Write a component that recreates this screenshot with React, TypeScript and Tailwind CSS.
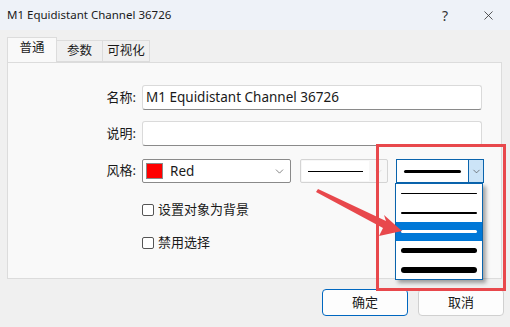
import { ChevronDown, X } from "lucide-react"

const font = { fontFamily: '"Noto Sans", "Noto Sans CJK SC", sans-serif' }

function LineItem({ h, active }: { h: number; active?: boolean }) {
  return (
    <div
      className={
        "flex h-[19px] items-center px-[5px] " + (active ? "bg-[#0078d7]" : "bg-white")
      }
    >
      <div
        className={"w-full rounded-full " + (active ? "bg-white" : "bg-black")}
        style={{ height: h }}
      />
    </div>
  )
}

export default function App() {
  return (
    <div
      className="relative flex h-[327px] w-[510px] flex-col overflow-hidden bg-[#f0f0f0] text-[#1a1a1a]"
      style={font}
    >
      {/* title bar */}
      <div className="flex h-[30px] items-center justify-between bg-[#eef2f8] pl-[7px] pr-[14px]">
        <span className="text-[11.5px]">M1 Equidistant Channel 36726</span>
        <div className="flex items-center gap-[33px]">
          <span className="text-[14px] text-[#333]">?</span>
          <X className="h-[15px] w-[15px] text-[#333]" strokeWidth={1.3} />
        </div>
      </div>

      {/* tabs */}
      <div className="mt-[8px] flex h-[24px] items-end px-[7px] text-[12.5px]">
        <div className="relative z-10 flex h-[25px] w-[50px] items-center justify-center border border-b-0 border-[#dcdcdc] bg-[#f9f9f9] pb-[3px]">
          普通
        </div>
        <div className="flex h-[22px] w-[46px] items-center justify-center border border-l-0 border-[#dcdcdc] bg-[#f0f0f0]">
          参数
        </div>
        <div className="flex h-[22px] w-[47px] items-center justify-center border border-l-0 border-[#dcdcdc] bg-[#f0f0f0]">
          可视化
        </div>
      </div>

      {/* panel */}
      <div className="mx-[7px] flex h-[217px] w-[495px] flex-col border border-[#dcdcdc] bg-[#f9f9f9] pt-[22px] text-[13px]">
        <div className="flex h-[25px] items-center">
          <span className="w-[128px] text-right">名称:</span>
          <div className="ml-[6px] flex h-[25px] w-[340px] items-center rounded-[3px] border border-[#dadada] border-b-[#8a8a8a] bg-white px-[3px] text-[13.5px]">
            M1 Equidistant Channel 36726
          </div>
        </div>
        <div className="mt-[11px] flex h-[25px] items-center">
          <span className="w-[128px] text-right">说明:</span>
          <div className="ml-[6px] h-[25px] w-[340px] rounded-[3px] border border-[#dadada] border-b-[#8a8a8a] bg-white" />
        </div>
        <div className="mt-[13px] flex h-[24px] items-center">
          <span className="w-[128px] text-right">风格:</span>
          <div className="ml-[6px] flex h-[24px] w-[149px] items-center rounded-[2px] border border-[#8a8a8a] bg-white pl-[3px] pr-[4px]">
            <div className="h-[16px] w-[17px] border border-[#8a8a8a] bg-[#ff0000]" />
            <span className="ml-[7px] flex-1 text-[13.5px]">Red</span>
            <ChevronDown className="h-[13px] w-[13px] text-[#555]" strokeWidth={1.3} />
          </div>
          <div className="ml-[9px] flex h-[24px] w-[88px] items-center rounded-[2px] border border-[#d4d4d4] bg-[#f7f7f7] p-[1px]">
            <div className="flex h-full w-[67px] items-center bg-white px-[6px]">
              <div className="h-[1px] w-full bg-black" />
            </div>
            <ChevronDown className="ml-[4px] h-[11px] w-[11px] text-[#cfcfcf]" strokeWidth={1.3} />
          </div>
          <div className="ml-[8px] flex h-[24px] w-[88px] items-stretch border border-[#0a64ad] bg-white">
            <div className="flex flex-1 items-center px-[7px]">
              <div className="h-[3px] w-full rounded-full bg-black" />
            </div>
            <div className="flex w-[15px] items-center justify-center border-l border-[#0a64ad] bg-[#cce4f7]">
              <ChevronDown className="h-[11px] w-[11px] text-[#444]" strokeWidth={1.4} />
            </div>
          </div>
        </div>

        <div className="mt-[20px] flex h-[14px] items-center pl-[134px]">
          <div className="h-[12px] w-[12px] rounded-[2px] border border-[#555] bg-white" />
          <span className="ml-[4px]">设置对象为背景</span>
        </div>
        <div className="mt-[19px] flex h-[14px] items-center pl-[134px]">
          <div className="h-[12px] w-[12px] rounded-[2px] border border-[#555] bg-white" />
          <span className="ml-[4px]">禁用选择</span>
        </div>
      </div>

      {/* buttons */}
      <div className="mt-[10px] flex justify-end gap-[10px] pr-[6px] text-[13px]">
        <button className="flex h-[27px] w-[86px] items-center justify-center rounded-[4px] border border-[#0067c0] bg-[#fdfdfd]">
          确定
        </button>
        <button className="flex h-[27px] w-[86px] items-center justify-center rounded-[4px] border border-[#d0d0d0] bg-[#fdfdfd]">
          取消
        </button>
      </div>

      {/* dropdown list */}
      <div className="absolute left-[395px] top-[183px] w-[88px] border border-[#0a64ad] bg-white shadow-[3px_3px_4px_rgba(0,0,0,0.35)]">
        <LineItem h={1} />
        <LineItem h={2} />
        <LineItem h={3} active />
        <LineItem h={5} />
        <LineItem h={6} />
      </div>

      {/* annotation */}
      <div className="pointer-events-none absolute left-[376px] top-[144px] h-[147px] w-[130px] border-[3px] border-[#e8484c]" />
      <svg className="pointer-events-none absolute left-0 top-0" width="510" height="327">
        <polygon
          points="318,189 386,221 384,215 402,231 379,236 383,228 316,192"
          fill="#e8484c"
        />
      </svg>
    </div>
  )
}
